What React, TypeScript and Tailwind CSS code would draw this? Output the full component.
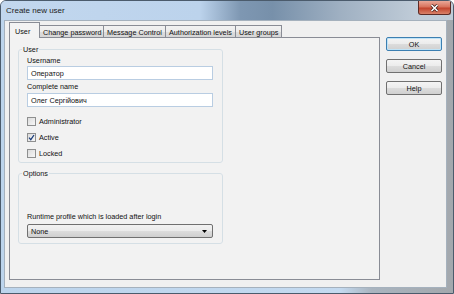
import React from "react";

const tabs = [
  { label: "User", w: "w-[31px]", active: true },
  { label: "Change password", w: "w-[64px]" },
  { label: "Message Control", w: "w-[62px]" },
  { label: "Authorization levels", w: "w-[70px]" },
  { label: "User groups", w: "w-[46px]" },
];

const Checkbox = ({ label, checked }: { label: string; checked?: boolean }) => (
  <div className="flex items-center h-[10px]">
    <div className="w-[9px] h-[9px] border border-[#8e8f8f] bg-[linear-gradient(135deg,#dcdcdc,#f7f7f7)] flex items-center justify-center">
      {checked && (
        <svg width="7" height="7" viewBox="0 0 7 7">
          <path d="M1 3.6 L2.8 5.6 L6 1" fill="none" stroke="#1d3f7c" strokeWidth="1.3" />
        </svg>
      )}
    </div>
    <span className="ml-[3px] leading-[9px]">{label}</span>
  </div>
);

const Btn = ({ label, def }: { label: string; def?: boolean }) => (
  <div
    className={
      "w-[56px] h-[14px] rounded-[2px] flex items-center justify-center leading-[9px] bg-[linear-gradient(#f4f4f4,#ebebeb_50%,#dcdcdc_51%,#d0d0d0)] " +
      (def ? "border border-[#3c7fb1] shadow-[inset_0_0_0_1px_#bfe3f7]" : "border border-[#707070]")
    }
  >
    {label}
  </div>
);

export default function App() {
  return (
    <div className="w-[454px] h-[294px] flex flex-col rounded-t-[6px] border border-[#4b5b6c] bg-[linear-gradient(to_right,#bcd4ec,#c4daf0_75%,#a9b4bf_82%,#a3a8ad)] font-['Liberation_Sans',Arial,sans-serif] text-[7.25px] text-[#111] overflow-hidden">
      {/* Title bar */}
      <div className="h-[19px] flex items-start bg-[linear-gradient(to_right,#c2d7ee,#bcd3ec_44%,#7e97b2_53%,#7790aa_60%,#9fb0c2_75%,#c0ccd8_92%)]">
        <span className="ml-[5px] mt-[5px] text-[8px] leading-[10px] text-[#1b1b1b]">Create new user</span>
        <div className="ml-auto mr-[2px] w-[33px] h-[14px] rounded-b-[3px] border border-t-0 border-[#5d2b25] bg-[linear-gradient(#eaa898,#d8735d_45%,#c2452e_55%,#d9826a)] flex items-center justify-center">
          <svg width="9" height="8" viewBox="0 0 9 8">
            <path d="M1.5 1 L7.5 7 M7.5 1 L1.5 7" stroke="#3a1a16" strokeWidth="3" />
            <path d="M1.5 1 L7.5 7 M7.5 1 L1.5 7" stroke="#ffffff" strokeWidth="1.6" />
          </svg>
        </div>
      </div>

      {/* Client area */}
      <div className="ml-[3px] mr-[6px] h-[268px] bg-[#f0f0f0] border border-[#a5b1bd] flex">
        {/* Tab control */}
        <div className="ml-[4px] mt-[1px] flex flex-col">
          <div className="flex items-end h-[16px] -mb-[1px] relative z-10">
            {tabs.map((t) =>
              t.active ? (
                <div
                  key={t.label}
                  className={`${t.w} h-[16px] border border-b-0 border-[#898c95] bg-[#f3f3f3] pl-[5px] pt-[4px] leading-[9px]`}
                >
                  {t.label}
                </div>
              ) : (
                <div
                  key={t.label}
                  className={`${t.w} h-[13px] border border-l-0 border-[#898c95] bg-[linear-gradient(#f2f2f2,#ebebeb_50%,#dddddd_51%,#d6d6d6)] pl-[3px] pt-[2px] leading-[9px] whitespace-nowrap overflow-hidden`}
                >
                  {t.label}
                </div>
              )
            )}
          </div>
          <div className="w-[371px] h-[243px] border border-[#898c95] bg-[#f2f2f2] pl-[8px] pt-[7px]">
            {/* User group */}
            <fieldset className="w-[205px] border border-[#d5dfe5] rounded-[3px]">
              <legend className="ml-[3px] px-[1px] leading-[9px]">User</legend>
              <div className="pl-[8px] pr-[9px] pb-[4px] flex flex-col">
                <span className="mt-[2px] h-[9px] leading-[9px]">Username</span>
                <div className="mt-[1px] h-[14px] border border-[#b9cde2] bg-white pl-[3px] flex items-center leading-[9px]">
                  Оператор
                </div>
                <span className="mt-[2px] h-[9px] leading-[9px]">Complete name</span>
                <div className="mt-[2px] h-[14px] border border-[#b9cde2] bg-white pl-[3px] flex items-center leading-[9px]">
                  Олег Сергійович
                </div>
                <div className="mt-[9px] flex flex-col gap-[6px]">
                  <Checkbox label="Administrator" />
                  <Checkbox label="Active" checked />
                  <Checkbox label="Locked" />
                </div>
              </div>
            </fieldset>

            {/* Options group */}
            <fieldset className="mt-[6px] w-[205px] border border-[#d5dfe5] rounded-[3px]">
              <legend className="ml-[3px] px-[1px] leading-[9px]">Options</legend>
              <div className="pl-[8px] pr-[9px] pb-[5px] flex flex-col">
                <span className="mt-[34px] h-[9px] leading-[9px]">Runtime profile which is loaded after login</span>
                <div className="mt-[3px] h-[14px] rounded-[2px] border border-[#707070] bg-[linear-gradient(#f2f2f2,#ebebeb_50%,#dddddd_51%,#cfcfcf)] pl-[3px] pr-[5px] flex items-center justify-between leading-[9px]">
                  <span>None</span>
                  <svg width="5" height="3" viewBox="0 0 5 3">
                    <path d="M0 0 H5 L2.5 3 Z" fill="#000" />
                  </svg>
                </div>
              </div>
            </fieldset>
          </div>
        </div>

        {/* Buttons */}
        <div className="ml-[6px] mt-[16px] flex flex-col gap-[8px]">
          <Btn label="OK" def />
          <Btn label="Cancel" />
          <Btn label="Help" />
        </div>
      </div>
    </div>
  );
}
